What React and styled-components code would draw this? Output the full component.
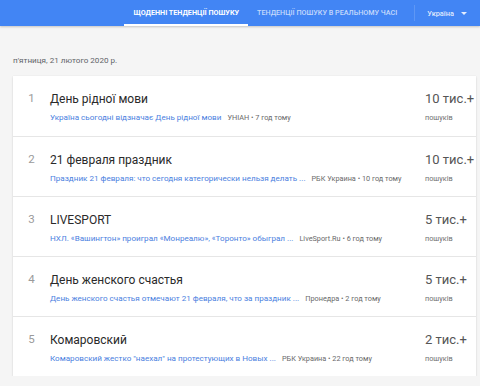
import React from 'react';
import styled, { createGlobalStyle } from 'styled-components';

const Global = createGlobalStyle`
  body {
    margin: 0;
    background: #f5f5f5;
    font-family: Roboto, "Liberation Sans", sans-serif;
  }
`;

const Header = styled.div`
  height: 26px;
  background: #4285f4;
  display: flex;
  justify-content: flex-end;
  align-items: stretch;
  padding-right: 13px;
  box-shadow: 0 1px 2px rgba(0, 0, 0, 0.2);
`;

const Tab = styled.div`
  display: flex;
  align-items: center;
  padding: 0 9px;
  font-size: 7.2px;
  font-weight: ${p => (p.active ? 700 : 500)};
  text-transform: uppercase;
  color: ${p => (p.active ? '#fff' : 'rgba(255,255,255,0.7)')};
  border-bottom: 2px solid ${p => (p.active ? '#fff' : 'transparent')};
  box-sizing: border-box;
  white-space: nowrap;
`;

const Divider = styled.div`
  width: 1px;
  background: rgba(255, 255, 255, 0.15);
  margin: 5px 12px 5px 8px;
`;

const Region = styled.div`
  display: flex;
  align-items: center;
  gap: 7px;
  font-size: 7.4px;
  font-weight: 500;
  color: rgba(255, 255, 255, 0.85);
`;

const Arrow = styled.span`
  width: 0;
  height: 0;
  border-left: 3px solid transparent;
  border-right: 3px solid transparent;
  border-top: 3px solid rgba(255, 255, 255, 0.85);
`;

const Main = styled.div`
  padding: 0 4px 0 13px;
`;

const DateLine = styled.div`
  font-size: 8.1px;
  color: #5f6368;
  padding: 29px 0 11px;
`;

const Card = styled.div`
  background: #fff;
  box-shadow: 0 1px 2px rgba(0, 0, 0, 0.12), 0 0 1px rgba(0, 0, 0, 0.08);
`;

const Row = styled.div`
  display: flex;
  height: 60px;
  box-sizing: border-box;
  border-top: ${p => (p.first ? 'none' : '1px solid #e6e6e6')};
`;

const Num = styled.div`
  width: 37px;
  padding-top: 15px;
  text-align: center;
  font-size: 11.5px;
  color: #9a9a9a;
`;

const Body = styled.div`
  flex: 1;
  min-width: 0;
  padding-top: 15px;
`;

const Title = styled.div`
  font-size: 12px;
  color: #2a2a2a;
  line-height: 16px;
`;

const Meta = styled.div`
  display: flex;
  align-items: baseline;
  gap: 6px;
  margin-top: 5px;
  white-space: nowrap;
`;

const Link = styled.span`
  font-size: 8.1px;
  color: #4a80e0;
`;

const Source = styled.span`
  font-size: 7.3px;
  color: #6a6a6a;
`;

const Count = styled.div`
  width: 51px;
  padding-top: 14px;
  white-space: nowrap;
`;

const Big = styled.div`
  font-size: 13px;
  font-weight: 400;
  color: #555;
  line-height: 18px;
`;

const Small = styled.div`
  font-size: 7.3px;
  color: #707070;
  margin-top: 5px;
`;

const items = [
  { n: 1, title: 'День рідної мови', link: 'Україна сьогодні відзначає День рідної мови', src: 'УНІАН • 7 год тому', count: '10 тис.+' },
  { n: 2, title: '21 февраля праздник', link: 'Праздник 21 февраля: что сегодня категорически нельзя делать ...', src: 'РБК Украина • 10 год тому', count: '10 тис.+' },
  { n: 3, title: 'LIVESPORT', link: 'НХЛ. «Вашингтон» проиграл «Монреалю», «Торонто» обыграл ...', src: 'LiveSport.Ru • 6 год тому', count: '5 тис.+' },
  { n: 4, title: 'День женского счастья', link: 'День женского счастья отмечают 21 февраля, что за праздник ...', src: 'Пронедра • 2 год тому', count: '5 тис.+' },
  { n: 5, title: 'Комаровский', link: 'Комаровский жестко "наехал" на протестующих в Новых ...', src: 'РБК Украина • 22 год тому', count: '2 тис.+' },
];

export default function App() {
  return (
    <>
      <Global />
      <Header>
        <Tab active>Щоденні тенденції пошуку</Tab>
        <Tab>Тенденції пошуку в реальному часі</Tab>
        <Divider />
        <Region>
          Україна
          <Arrow />
        </Region>
      </Header>
      <Main>
        <DateLine>п'ятниця, 21 лютого 2020 р.</DateLine>
        <Card>
          {items.map((it, i) => (
            <Row key={it.n} first={i === 0}>
              <Num>{it.n}</Num>
              <Body>
                <Title>{it.title}</Title>
                <Meta>
                  <Link>{it.link}</Link>
                  <Source>{it.src}</Source>
                </Meta>
              </Body>
              <Count>
                <Big>{it.count}</Big>
                <Small>пошуків</Small>
              </Count>
            </Row>
          ))}
        </Card>
      </Main>
    </>
  );
}
